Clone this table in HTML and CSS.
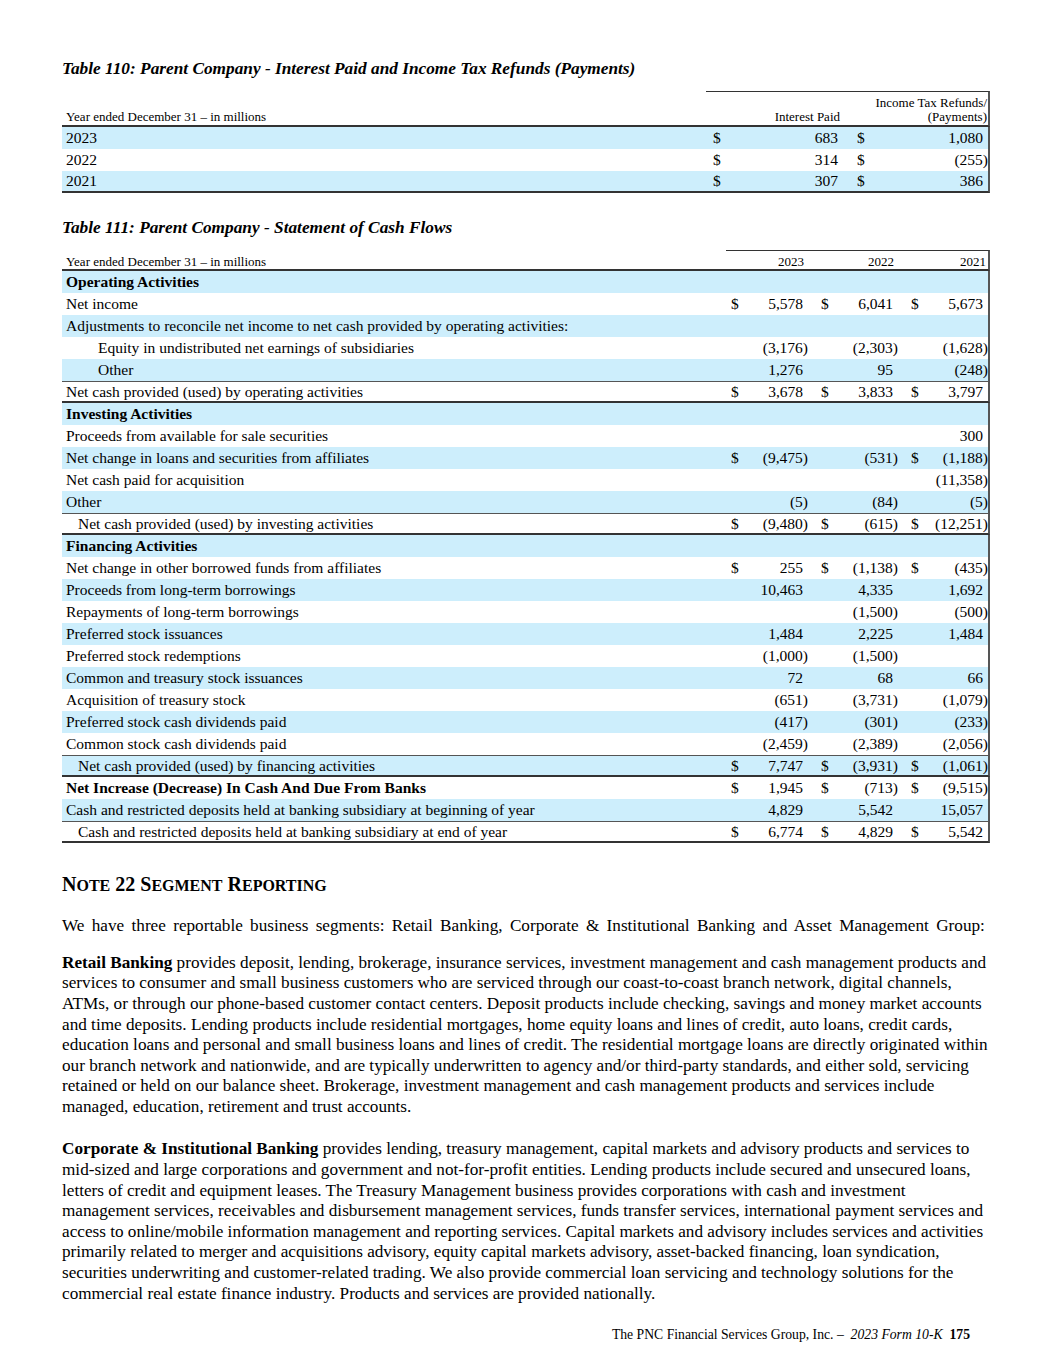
FILE: index.html
```html
<!DOCTYPE html>
<html lang="en">
<head>
<meta charset="utf-8">
<title>PNC 10-K page 175</title>
<link rel="stylesheet" href="styles.css">
</head>
<body>
<div class="page">
  <p class="ttl">Table 110: Parent Company - Interest Paid and Income Tax Refunds (Payments)</p>
  <table class="fin t110">
    <colgroup><col class="c-l"><col class="c-d1"><col class="c-v1"><col class="c-d2"><col class="c-v2"></colgroup>
    <thead>
      <tr>
        <th class="lbl">Year ended December 31 – in millions</th>
        <th class="hd" colspan="2">Interest Paid</th>
        <th class="hd last" colspan="2">Income Tax Refunds/<br>(Payments)</th>
      </tr>
    </thead>
    <tbody>
      <tr><td class="lbl">2023</td><td class="d">$</td><td class="v">683</td><td class="d">$</td><td class="v last">1,080</td></tr>
      <tr><td class="lbl">2022</td><td class="d">$</td><td class="v">314</td><td class="d">$</td><td class="v n last">(255)</td></tr>
      <tr class="end"><td class="lbl">2021</td><td class="d">$</td><td class="v">307</td><td class="d">$</td><td class="v last">386</td></tr>
    </tbody>
  </table>

  <p class="ttl t2">Table 111: Parent Company - Statement of Cash Flows</p>
  <table class="fin t111">
    <colgroup><col class="c-l"><col class="c-d1"><col class="c-v1"><col class="c-d2"><col class="c-v2"><col class="c-d3"><col class="c-v3"></colgroup>
    <thead>
      <tr>
        <th class="lbl">Year ended December 31 – in millions</th>
        <th class="hd" colspan="2">2023</th>
        <th class="hd" colspan="2">2022</th>
        <th class="hd last" colspan="2">2021</th>
      </tr>
    </thead>
    <tbody>
      <tr><td class="lbl b">Operating Activities</td><td></td><td></td><td></td><td></td><td></td><td class="last"></td></tr>
      <tr><td class="lbl">Net income</td><td class="d">$</td><td class="v">5,578</td><td class="d">$</td><td class="v">6,041</td><td class="d">$</td><td class="v last">5,673</td></tr>
      <tr><td class="lbl">Adjustments to reconcile net income to net cash provided by operating activities:</td><td></td><td></td><td></td><td></td><td></td><td class="last"></td></tr>
      <tr><td class="lbl i2">Equity in undistributed net earnings of subsidiaries</td><td></td><td class="v n">(3,176)</td><td></td><td class="v n">(2,303)</td><td></td><td class="v n last">(1,628)</td></tr>
      <tr><td class="lbl i2">Other</td><td></td><td class="v">1,276</td><td></td><td class="v">95</td><td></td><td class="v n last">(248)</td></tr>
      <tr class="sub"><td class="lbl">Net cash provided (used) by operating activities</td><td class="d">$</td><td class="v">3,678</td><td class="d">$</td><td class="v">3,833</td><td class="d">$</td><td class="v last">3,797</td></tr>
      <tr><td class="lbl b">Investing Activities</td><td></td><td></td><td></td><td></td><td></td><td class="last"></td></tr>
      <tr><td class="lbl">Proceeds from available for sale securities</td><td></td><td></td><td></td><td></td><td></td><td class="v last">300</td></tr>
      <tr><td class="lbl">Net change in loans and securities from affiliates</td><td class="d">$</td><td class="v n">(9,475)</td><td></td><td class="v n">(531)</td><td class="d">$</td><td class="v n last">(1,188)</td></tr>
      <tr><td class="lbl">Net cash paid for acquisition</td><td></td><td></td><td></td><td></td><td></td><td class="v n last">(11,358)</td></tr>
      <tr><td class="lbl">Other</td><td></td><td class="v n">(5)</td><td></td><td class="v n">(84)</td><td></td><td class="v n last">(5)</td></tr>
      <tr class="sub"><td class="lbl i1">Net cash provided (used) by investing activities</td><td class="d">$</td><td class="v n">(9,480)</td><td class="d">$</td><td class="v n">(615)</td><td class="d">$</td><td class="v n last">(12,251)</td></tr>
      <tr><td class="lbl b">Financing Activities</td><td></td><td></td><td></td><td></td><td></td><td class="last"></td></tr>
      <tr><td class="lbl">Net change in other borrowed funds from affiliates</td><td class="d">$</td><td class="v">255</td><td class="d">$</td><td class="v n">(1,138)</td><td class="d">$</td><td class="v n last">(435)</td></tr>
      <tr><td class="lbl">Proceeds from long-term borrowings</td><td></td><td class="v">10,463</td><td></td><td class="v">4,335</td><td></td><td class="v last">1,692</td></tr>
      <tr><td class="lbl">Repayments of long-term borrowings</td><td></td><td></td><td></td><td class="v n">(1,500)</td><td></td><td class="v n last">(500)</td></tr>
      <tr><td class="lbl">Preferred stock issuances</td><td></td><td class="v">1,484</td><td></td><td class="v">2,225</td><td></td><td class="v last">1,484</td></tr>
      <tr><td class="lbl">Preferred stock redemptions</td><td></td><td class="v n">(1,000)</td><td></td><td class="v n">(1,500)</td><td></td><td class="last"></td></tr>
      <tr><td class="lbl">Common and treasury stock issuances</td><td></td><td class="v">72</td><td></td><td class="v">68</td><td></td><td class="v last">66</td></tr>
      <tr><td class="lbl">Acquisition of treasury stock</td><td></td><td class="v n">(651)</td><td></td><td class="v n">(3,731)</td><td></td><td class="v n last">(1,079)</td></tr>
      <tr><td class="lbl">Preferred stock cash dividends paid</td><td></td><td class="v n">(417)</td><td></td><td class="v n">(301)</td><td></td><td class="v n last">(233)</td></tr>
      <tr><td class="lbl">Common stock cash dividends paid</td><td></td><td class="v n">(2,459)</td><td></td><td class="v n">(2,389)</td><td></td><td class="v n last">(2,056)</td></tr>
      <tr class="sub"><td class="lbl i1">Net cash provided (used) by financing activities</td><td class="d">$</td><td class="v">7,747</td><td class="d">$</td><td class="v n">(3,931)</td><td class="d">$</td><td class="v n last">(1,061)</td></tr>
      <tr><td class="lbl b">Net Increase (Decrease) In Cash And Due From Banks</td><td class="d">$</td><td class="v">1,945</td><td class="d">$</td><td class="v n">(713)</td><td class="d">$</td><td class="v n last">(9,515)</td></tr>
      <tr><td class="lbl">Cash and restricted deposits held at banking subsidiary at beginning of year</td><td></td><td class="v">4,829</td><td></td><td class="v">5,542</td><td></td><td class="v last">15,057</td></tr>
      <tr class="sub"><td class="lbl i1">Cash and restricted deposits held at banking subsidiary at end of year</td><td class="d">$</td><td class="v">6,774</td><td class="d">$</td><td class="v">4,829</td><td class="d">$</td><td class="v last">5,542</td></tr>
    </tbody>
  </table>

  <h2 class="note"><span class="cap">N</span><span class="sc">OTE</span> <span class="cap">22 S</span><span class="sc">EGMENT</span> <span class="cap">R</span><span class="sc">EPORTING</span></h2>

  <p class="txt p1">We have three reportable business segments: Retail Banking, Corporate &amp; Institutional Banking and Asset Management Group:</p>

  <p class="txt p2"><b>Retail Banking</b> provides deposit, lending, brokerage, insurance services, investment management and cash management products and services to consumer and small business customers who are serviced through our coast-to-coast branch network, digital channels, ATMs, or through our phone-based customer contact centers. Deposit products include checking, savings and money market accounts and time deposits. Lending products include residential mortgages, home equity loans and lines of credit, auto loans, credit cards, education loans and personal and small business loans and lines of credit. The residential mortgage loans are directly originated within our branch network and nationwide, and are typically underwritten to agency and/or third-party standards, and either sold, servicing retained or held on our balance sheet. Brokerage, investment management and cash management products and services include managed, education, retirement and trust accounts.</p>

  <p class="txt p3"><b>Corporate &amp; Institutional Banking</b> provides lending, treasury management, capital markets and advisory products and services to mid-sized and large corporations and government and not-for-profit entities. Lending products include secured and unsecured loans, letters of credit and equipment leases. The Treasury Management business provides corporations with cash and investment management services, receivables and disbursement management services, funds transfer services, international payment services and access to online/mobile information management and reporting services. Capital markets and advisory includes services and activities primarily related to merger and acquisitions advisory, equity capital markets advisory, asset-backed financing, loan syndication, securities underwriting and customer-related trading. We also provide commercial loan servicing and technology solutions for the commercial real estate finance industry. Products and services are provided nationally.</p>

  <p class="foot">The PNC Financial Services Group, Inc. –&nbsp; <i>2023 Form 10-K</i>&nbsp; <b>175</b></p>
</div>
</body>
</html>
```

FILE: styles.css
```css
* { box-sizing: border-box; }

body {
  margin: 0;
  background: #fff;
  color: #000;
  font-family: "Liberation Serif", "Times New Roman", serif;
}

.page {
  width: 1055px;
  padding: 59px 0 0 62px;
}

.ttl {
  margin: 0 0 12px;
  font-size: 17.3px;
  line-height: 20px;
  font-weight: bold;
  font-style: italic;
}

.ttl.t2 {
  margin-top: 25px;
}

table.fin {
  width: 928px;
  border-collapse: separate;
  border-spacing: 0;
  table-layout: fixed;
  font-size: 15.5px;
}

/* header cells */
.fin th {
  font-weight: normal;
  font-size: 13px;
  line-height: 14px;
  vertical-align: bottom;
  text-align: left;
  white-space: nowrap;
  border-bottom: 2px solid #333;
}

.t110 th { padding: 0 0 1px; }
.t110 th.hd { padding-top: 4px; }
.t111 th { padding: 4px 0 0; }
.t111 th.lbl { padding-top: 5px; }

.fin th.hd {
  text-align: right;
  border-top: 1px solid #333;
}

/* body cells */
.fin td {
  line-height: 22px;
  padding: 0;
  white-space: nowrap;
  vertical-align: middle;
}

.fin tbody tr:nth-child(odd) td {
  background: #cdeefc;
}

.fin .last {
  border-right: 2px solid #555;
}

.fin tr.sub td {
  line-height: 19px;
  border-top: 1px solid #555;
  border-bottom: 2px solid #333;
}

.fin tr.end td {
  line-height: 20px;
  border-bottom: 2px solid #333;
}

.fin .lbl { padding-left: 4px; }
.fin .i1 { padding-left: 16px; }
.fin .i2 { padding-left: 36px; }
.fin .b { font-weight: bold; }

.fin .d { text-align: left; }

.fin .v {
  text-align: right;
  padding-right: 5px;
}

.fin .v.n { padding-right: 0; }

/* Table 110 columns */
.t110 .c-l { width: 644px; }
.t110 .c-d1 { width: 24px; }
.t110 .c-v1 { width: 113px; }
.t110 .c-d2 { width: 27px; }
.t110 .c-v2 { width: 120px; }
.t110 td:nth-child(2) { padding-left: 7px; }
.t110 td:nth-child(4) { padding-left: 14px; }
.t110 th.hd { padding-right: 3px; }
.t110 th.last { padding-right: 1px; }

/* Table 111 columns */
.t111 .c-l { width: 664px; }
.t111 .c-d1 { width: 18px; }
.t111 .c-v1 { width: 64px; }
.t111 .c-d2 { width: 22px; }
.t111 .c-v2 { width: 68px; }
.t111 .c-d3 { width: 20px; }
.t111 .c-v3 { width: 72px; }
.t111 td:nth-child(2) { padding-left: 5px; }
.t111 td:nth-child(4) { padding-left: 13px; }
.t111 td:nth-child(6) { padding-left: 13px; }
.t111 th.hd { padding-right: 4px; }
.t111 th.last { padding-right: 2px; }

.note {
  margin: 29px 0 0;
  font-weight: bold;
  line-height: 24px;
  font-size: 20px;
}

.note .cap { font-size: 20px; }
.note .sc { font-size: 16px; }

.txt {
  width: 931px;
  margin: 0;
  font-size: 17.2px;
  line-height: 20.65px;
}

.p1 {
  margin-top: 17.6px;
  word-spacing: 3px;
}
.p2 { margin-top: 16.3px; }
.p3 { margin-top: 21.4px; }

.foot {
  width: 928px;
  margin: 22.7px 0 0;
  padding-right: 20px;
  text-align: right;
  font-size: 13.7px;
  line-height: 16px;
}
```
